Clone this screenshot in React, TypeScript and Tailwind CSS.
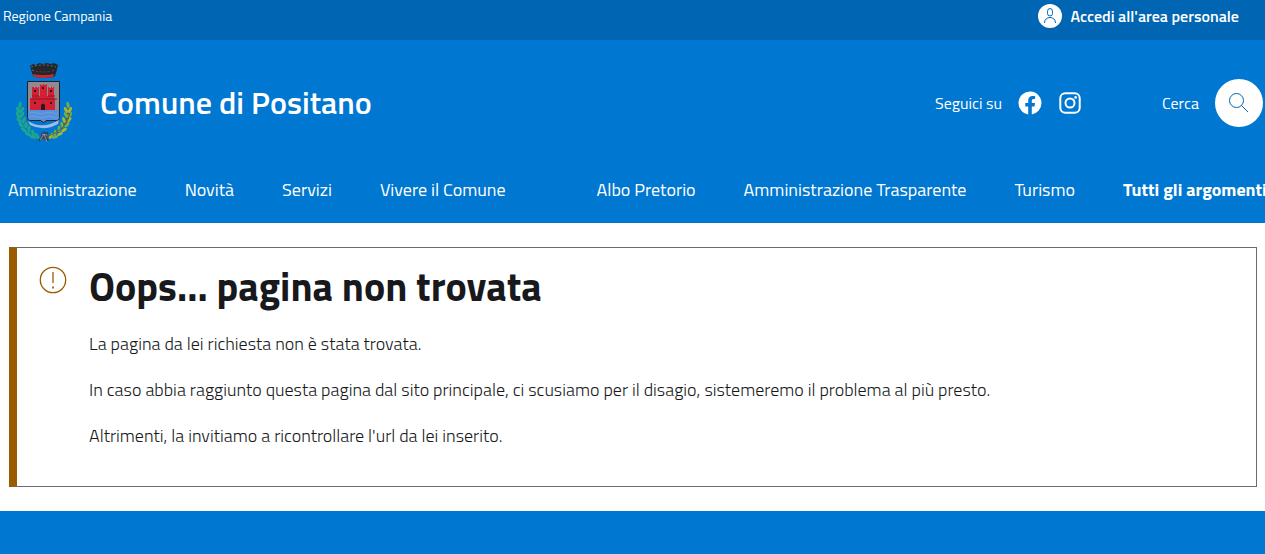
interface NavLink {
  label: string;
  bold?: boolean;
}

/* ─── Static data ─────────────────────────────────────────────────────────── */
const PRIMARY_LINKS: NavLink[] = [
  { label: "Amministrazione" },
  { label: "Novità" },
  { label: "Servizi" },
  { label: "Vivere il Comune" },
];

const SECONDARY_LINKS: NavLink[] = [
  { label: "Albo Pretorio" },
  { label: "Amministrazione Trasparente" },
  { label: "Turismo" },
  { label: "Tutti gli argomenti", bold: true },
];

const MESSAGES: string[] = [
  "La pagina da lei richiesta non è stata trovata.",
  "In caso abbia raggiunto questa pagina dal sito principale, ci scusiamo per il disagio, sistemeremo il problema al più presto.",
  "Altrimenti, la invitiamo a ricontrollare l'url da lei inserito.",
];

/* Leaves of the left branch: x, y, rotation. The right branch mirrors them. */
const LEAVES: [number, number, number][] = [
  [4, 42, 10], [2, 47, -25], [6, 47, 30], [2, 52, -30], [6, 52, 30],
  [3, 57, -40], [8, 57, 20], [5, 62, -45], [10, 62, 10], [8, 67, -55],
  [13, 66, 0], [12, 71, -65], [17, 70, -10], [17, 74, -75], [21, 73, -30],
];

/* ─── Icons ───────────────────────────────────────────────────────────────── */
function Crest() {
  return (
    <svg className="h-20 w-14 shrink-0" viewBox="0 0 56 80" fill="none" aria-hidden="true">
      {/* Crown */}
      <path d="M14 3l3-2 3 1 3-2 4 1 4-1 4 1 3-1 4 2-2 8c-1 3-2 4-3 4q-9 2-18 0c-2 0-2-2-3-4z" fill="#25262b" />
      <path d="M15 4q12-4 25 0M16 7q11 4 23 0" stroke="#6c6f74" strokeWidth="1" strokeDasharray="2 2" />
      <path d="M17 11q11 2 21 0l-1 3q-9 2-19 0z" fill="#c52b36" />
      <path d="M21 7v5M25 8v4M29 8v4M33 8v4M36 7v4" stroke="#25262b" />
      {/* Shield */}
      <path d="M11.500 18.500h32v36q0 3-3 3h-10l-3 2-3-2h-10q-3 0-3-3z" fill="#91898d" stroke="#17202d" />
      <path d="M12 47h31v7q0 3-3 3H15q-3 0-3-3z" fill="#568fda" />
      <path d="M13 50q4-2 8 0t8 0 8 0 5 0M13 54q4-2 8 0t8 0 8 0 5 0" stroke="#6b9fe0" />
      <path d="M14 47V36l2-1V24h2v1h1v-1h2v1h1v-1h1v9h1V22l1-1v1h2v-1h1v1h2v-1h1v12h1v-9h1v1h2v-1h1v1h1v-1h1v11l1 1v11z" fill="#d51f32" />
      <path d="M14 36h27M16 33h7M32 33h7" stroke="#8d1728" />
      <path d="M18 27h2v2h-2zM26 24h2v2h-2zM34 27h2v2h-2zM18 39h2v2h-2zM34 39h2v2h-2zM25 47v-5q2-3 4 0v5z" fill="#251a24" />
      {/* Laurel and oak branches */}
      <path d="M4 42q-3 24 25 34" stroke="#138d93" strokeWidth="1.500" />
      <path d="M52 42q3 24-25 34" stroke="#635d2c" strokeWidth="1.500" />
      {LEAVES.map(([x, y, angle]) => (
        <g key={`${x}-${y}`}>
          <ellipse cx={x} cy={y} rx="1.600" ry="3.400" fill="#1fa58f" transform={`rotate(${angle} ${x} ${y})`} />
          <ellipse cx={56 - x} cy={y} rx="1.500" ry="3.200" fill={y % 2 ? "#a5b82e" : "#6fae55"} transform={`rotate(${-angle} ${56 - x} ${y})`} />
        </g>
      ))}
      <path d="M54 50q-3 17-24 24" stroke="#635d2c" />
      {/* Ribbon */}
      <path d="M12 58q14 9 31-1l-1 4q-14 8-28 1z" fill="#9fbbe6" />
      <path d="M23 78l5-8 4 8M25 71l7-1-6 4 5 3" stroke="#373e51" strokeWidth="2" />
      <path d="M24 77l4-6 3 8M26 71l5 1" stroke="#9aa5b9" strokeWidth="0.800" />
    </svg>
  );
}

function UserIcon() {
  return (
    <svg className="size-4" viewBox="0 0 16 16" fill="none" stroke="#0066b3" aria-hidden="true">
      <path d="M5.500 3.500q0-3 2.500-3t2.500 3v2q0 2.500-2.500 2.500t-2.500-2.500z" />
      <path d="M2.500 15c0-3.500 2.500-5.500 5.500-5.500s5.500 2 5.500 5.500" />
    </svg>
  );
}

function FacebookIcon() {
  return (
    <svg className="size-6" viewBox="0 0 24 24" fill="currentColor" aria-hidden="true">
      <path d="M23.500 12.070a11.500 11.500 0 1 0-13.300 11.360v-8.030H7.280v-3.330h2.920V9.540c0-2.880 1.720-4.480 4.350-4.480 1.260 0 2.570.230 2.570.230v2.830h-1.450c-1.430 0-1.870.890-1.870 1.800v2.150h3.190l-.510 3.330H13.800v8.030a11.500 11.500 0 0 0 9.700-11.360z" />
    </svg>
  );
}

function InstagramIcon() {
  return (
    <svg className="size-6" viewBox="0 0 24 24" fill="none" stroke="currentColor" strokeWidth="2" aria-hidden="true">
      <rect x="2.300" y="2.300" width="19.400" height="19.400" rx="5" />
      <circle cx="12" cy="12" r="4.500" />
      <circle cx="17.600" cy="6.400" r="1.300" fill="currentColor" stroke="none" />
    </svg>
  );
}

function SearchIcon() {
  return (
    <svg className="size-6" viewBox="0 0 24 24" fill="none" stroke="#0066b3" aria-hidden="true">
      <circle cx="9.500" cy="9.500" r="7" />
      <path d="M14.500 14.500l6.500 6.500" />
    </svg>
  );
}

function WarningIcon() {
  return (
    <svg className="size-8 shrink-0" viewBox="0 0 32 32" fill="none" stroke="#995c00" strokeWidth="1.300" aria-hidden="true">
      <circle cx="16" cy="16" r="12.700" />
      <path d="M16 8v11" />
      <path d="M16 22.500v2" strokeWidth="1.700" />
    </svg>
  );
}

function NavList({ links }: { links: NavLink[] }) {
  return (
    <ul className="flex shrink-0 gap-12 whitespace-nowrap">
      {links.map((link) => (
        <li key={link.label}>
          <a href="#" className={link.bold ? "font-bold" : ""}>
            {link.label}
          </a>
        </li>
      ))}
    </ul>
  );
}

/* ─── App ─────────────────────────────────────────────────────────────────── */
export default function App() {
  return (
    <div className="flex min-h-screen flex-col overflow-x-hidden bg-white font-['Titillium_Web','Lato',sans-serif] text-[#17191c]">
      <header className="bg-[#0077d0] text-white">
        {/* Slim header */}
        <div className="flex h-10 items-start justify-between bg-[#0066b3] pr-[26px] pl-[3px]">
          <a href="#" className="text-sm leading-8">Regione Campania</a>
          <a href="#" className="flex h-8 items-center gap-2 text-base font-semibold">
            <span className="flex size-6 items-center justify-center rounded-full bg-white">
              <UserIcon />
            </span>
            Accedi all'area personale
          </a>
        </div>

        {/* Brand, social links and search */}
        <div className="flex h-[126px] items-center justify-between pr-0.5 pl-4">
          <a href="#" className="flex items-center gap-7">
            <Crest />
            <span className="pb-0.5 text-[32px] font-semibold">Comune di Positano</span>
          </a>
          <div className="flex items-center gap-20">
            <div className="flex items-center gap-4">
              <span>Seguici su</span>
              <a href="#" aria-label="Facebook"><FacebookIcon /></a>
              <a href="#" aria-label="Instagram"><InstagramIcon /></a>
            </div>
            <div className="flex items-center gap-4">
              <label htmlFor="search">Cerca</label>
              <button id="search" type="button" className="flex size-12 items-center justify-center rounded-full bg-white">
                <SearchIcon />
              </button>
            </div>
          </div>
        </div>

        <nav className="flex gap-[91px] overflow-hidden pt-2.5 pb-[19px] pl-2 text-lg leading-7">
          <NavList links={PRIMARY_LINKS} />
          <NavList links={SECONDARY_LINKS} />
        </nav>
      </header>

      <main className="py-6 pr-2 pl-[9px]">
        <div role="alert" className="flex gap-5 border border-l-8 border-[#696b70] border-l-[#995c00] pt-4 pr-4 pb-9 pl-5">
          <WarningIcon />
          <div>
            <h1 className="mb-5 text-[40px] leading-[46px] font-bold">Oops... pagina non trovata</h1>
            <div className="flex flex-col gap-[18px] text-lg leading-7 font-light">
              {MESSAGES.map((message) => (
                <p key={message}>{message}</p>
              ))}
            </div>
          </div>
        </div>
      </main>

      <footer className="flex-1 bg-[#0077d0]" />
    </div>
  );
}
